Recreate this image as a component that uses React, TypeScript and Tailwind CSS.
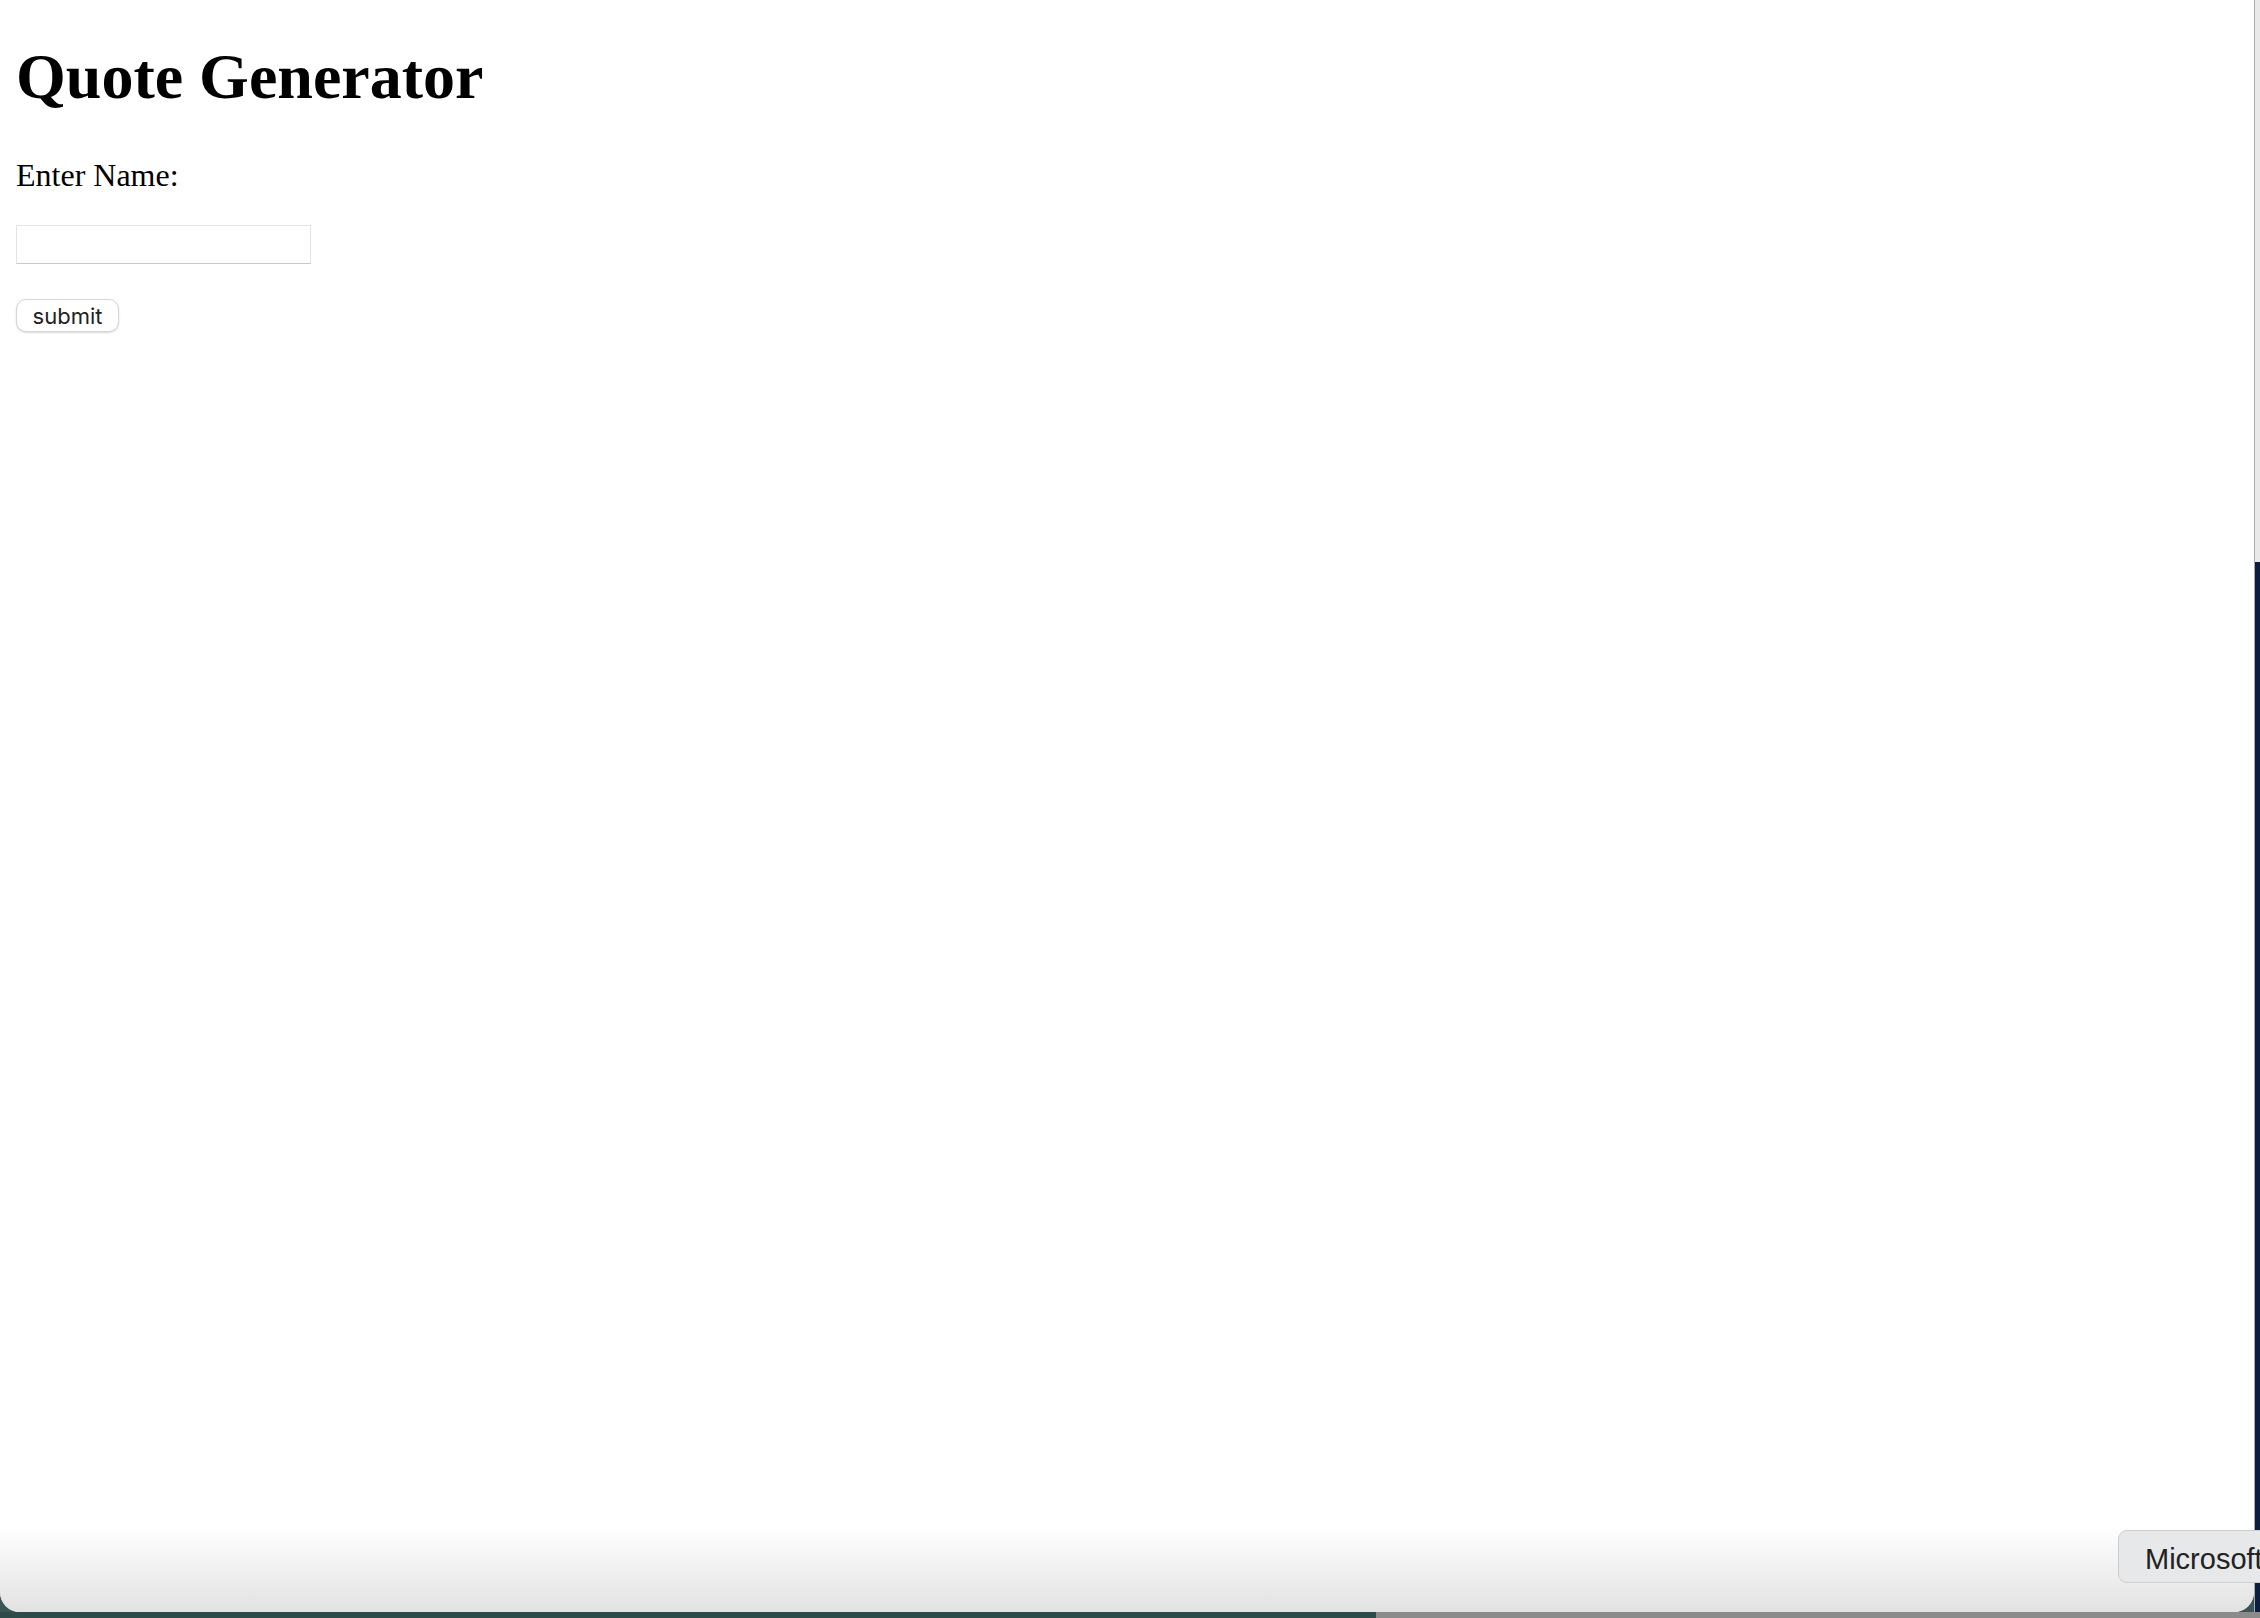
const serif = { fontFamily: '"Liberation Serif", "Times New Roman", serif' };

export default function App() {
  return (
    <div className="w-[2260px] h-[1618px] bg-[#3c5655] flex flex-col overflow-hidden">
      <div className="flex flex-1 min-h-0">
        <div className="relative flex-1 bg-white rounded-b-[20px] overflow-hidden">
          <div className="pl-4 text-black" style={serif}>
            <h1 className="mt-[40px] text-[64px] font-bold leading-[74px]">Quote Generator</h1>
            <p className="mt-[43px] text-[32px] leading-[37px]">Enter Name:</p>
            <input
              type="text"
              className="mt-[31px] block w-[295px] h-[39px] border border-[#e3e3e3] border-b-[#c9c9c9] bg-white outline-none"
            />
            <button
              className="mt-[35px] block w-[103px] h-[33px] rounded-[10px] border border-[#d6d6d6] bg-white text-[22px] text-[#222] shadow-[0_1px_2px_rgba(0,0,0,0.15)] leading-none"
              style={{ fontFamily: 'Inter, "Liberation Sans", sans-serif' }}
            >
              submit
            </button>
          </div>
          <div className="absolute inset-x-0 bottom-0 h-[85px] bg-gradient-to-b from-white/0 to-[#e2e2e2]" />
        </div>
        <div className="w-[6px] flex flex-col border-l border-[#a9a9a9]">
          <div className="h-[562px] bg-[#e9e9e9]" />
          <div className="flex-1 bg-[#0d1d3f]" />
        </div>
      </div>
      <div className="h-[6px] flex">
        <div className="w-[1376px] bg-[#2e4a49]" />
        <div className="flex-1 bg-[#8b8b8b]" />
      </div>
      <div
        className="absolute left-[2118px] top-[1530px] h-[53px] w-[200px] rounded-[9px] border border-[#cdcdcd] bg-[#e7e8ea] pl-[26px] pt-[2px] text-[29px] leading-[53px] text-[#222]"
        style={{ fontFamily: '"Liberation Sans", Arial, sans-serif' }}
      >
        Microsoft
      </div>
    </div>
  );
}
